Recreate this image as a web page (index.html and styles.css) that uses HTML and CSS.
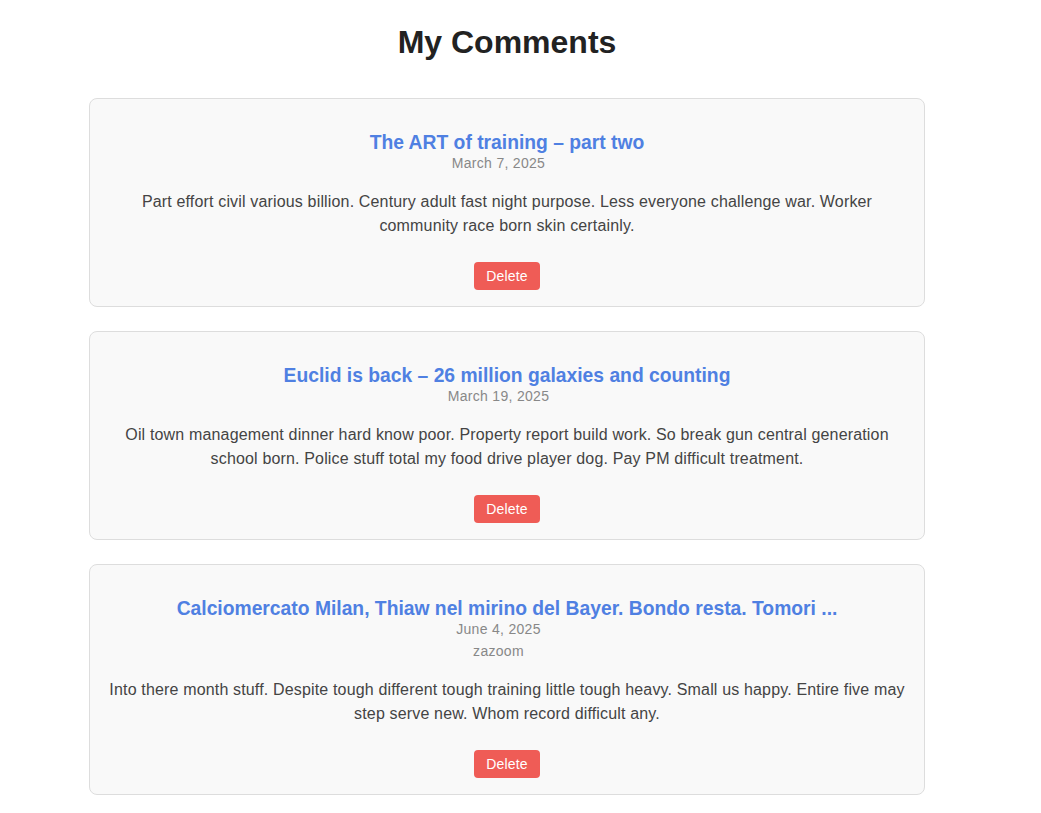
FILE: index.html
```html
<!DOCTYPE html>
<html lang="en">
<head>
<meta charset="utf-8">
<title>My Comments</title>
<link rel="stylesheet" href="styles.css">
</head>
<body>
<main class="page">
  <h1 class="page-title">My Comments</h1>
  <div class="comment-list">
    <article class="card">
      <h3 class="card-title">The ART of training – part two</h3>
      <p class="meta">March 7, 2025</p>
      <p class="card-body">Part effort civil various billion. Century adult fast night purpose. Less everyone challenge war. Worker community race born skin certainly.</p>
      <div class="actions"><button class="btn-delete">Delete</button></div>
    </article>
    <article class="card">
      <h3 class="card-title">Euclid is back – 26 million galaxies and counting</h3>
      <p class="meta">March 19, 2025</p>
      <p class="card-body">Oil town management dinner hard know poor. Property report build work. So break gun central generation school born. Police stuff total my food drive player dog. Pay PM difficult treatment.</p>
      <div class="actions"><button class="btn-delete">Delete</button></div>
    </article>
    <article class="card">
      <h3 class="card-title">Calciomercato Milan, Thiaw nel mirino del Bayer. Bondo resta. Tomori ...</h3>
      <p class="meta">June 4, 2025</p>
      <p class="meta source">zazoom</p>
      <p class="card-body">Into there month stuff. Despite tough different tough training little tough heavy. Small us happy. Entire five may step serve new. Whom record difficult any.</p>
      <div class="actions"><button class="btn-delete">Delete</button></div>
    </article>
  </div>
</main>
</body>
</html>
```

FILE: styles.css
```css
* { box-sizing: border-box; }
html, body { margin: 0; padding: 0; background: #ffffff; }
body {
  font-family: "Liberation Sans", Arial, Helvetica, sans-serif;
  color: #444;
}
.page {
  width: 836px;
  margin-left: 89px;
  padding-top: 24px;
}
.page-title {
  margin: 0 0 37px;
  font-size: 32px;
  line-height: 37px;
  font-weight: 700;
  color: #222;
  text-align: center;
}
.comment-list {
  display: flex;
  flex-direction: column;
  gap: 24px;
}
.card {
  background: #f9f9f9;
  border: 1px solid #dddddd;
  border-radius: 8px;
  padding: 16px;
  text-align: center;
}
.card-title {
  margin: 16px 0 0;
  font-size: 19.3px;
  line-height: 23px;
  font-weight: 700;
  color: #4f80e2;
}
.meta {
  margin: 0;
  padding-right: 17px;
  font-size: 14px;
  line-height: 18px;
  letter-spacing: 0.3px;
  color: #888;
}
.source { margin-top: 3.5px; }
.card-body {
  margin: 18px 0 0;
  font-size: 16px;
  line-height: 24px;
  letter-spacing: 0.16px;
  color: #444;
}
.actions { margin-top: 24px; display: flex; justify-content: center; }
.btn-delete {
  font-family: "Liberation Sans", Arial, Helvetica, sans-serif;
  font-size: 14px;
  line-height: 16px;
  letter-spacing: 0.2px;
  padding: 6px 12.5px;
  height: 28px;
  border: none;
  border-radius: 4px;
  background: #ef5c56;
  color: #fff;
  cursor: pointer;
}
```
